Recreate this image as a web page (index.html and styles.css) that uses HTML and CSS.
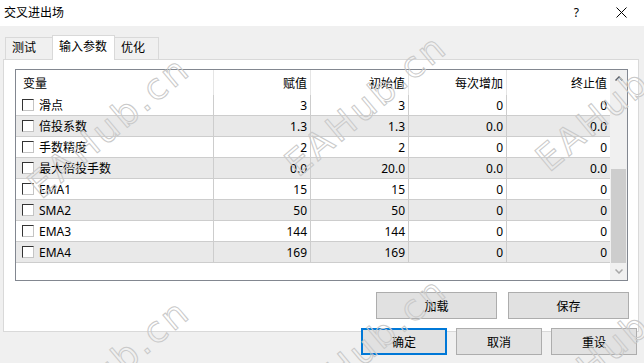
FILE: index.html
```html
<!DOCTYPE html>
<html>
  <head>
    <meta charset="utf-8">
    <title>交叉进出场</title>
    <link rel="stylesheet" href="styles.css">
  </head>
  <body>
    <div class="window">
      <div class="titlebar">
        <span class="title">交叉进出场</span>
        <span class="help">?</span>
        <svg class="close" width="11" height="11" viewBox="0 0 11 11">
          <path d="M0.5 0.5 L10.5 10.5 M10.5 0.5 L0.5 10.5" stroke="#000" stroke-width="1" fill="none"/>
        </svg>
      </div>

      <div class="tabs">
        <div class="tab tab-test">测试</div>
        <div class="tab tab-input active">输入参数</div>
        <div class="tab tab-opt">优化</div>
      </div>

      <div class="panel">
        <div class="list">
          <div class="grid">
            <div class="row head">
              <div class="cell name">变量</div>
              <div class="cell">赋值</div>
              <div class="cell">初始值</div>
              <div class="cell">每次增加</div>
              <div class="cell">终止值</div>
            </div>
            <div class="row">
              <div class="cell name"><span class="check"></span>滑点</div>
              <div class="cell">3</div><div class="cell">3</div><div class="cell">0</div><div class="cell">0</div>
            </div>
            <div class="row">
              <div class="cell name"><span class="check"></span>倍投系数</div>
              <div class="cell">1.3</div><div class="cell">1.3</div><div class="cell">0.0</div><div class="cell">0.0</div>
            </div>
            <div class="row">
              <div class="cell name"><span class="check"></span>手数精度</div>
              <div class="cell">2</div><div class="cell">2</div><div class="cell">0</div><div class="cell">0</div>
            </div>
            <div class="row">
              <div class="cell name"><span class="check"></span>最大倍投手数</div>
              <div class="cell">0.0</div><div class="cell">20.0</div><div class="cell">0.0</div><div class="cell">0.0</div>
            </div>
            <div class="row">
              <div class="cell name"><span class="check"></span>EMA1</div>
              <div class="cell">15</div><div class="cell">15</div><div class="cell">0</div><div class="cell">0</div>
            </div>
            <div class="row">
              <div class="cell name"><span class="check"></span>SMA2</div>
              <div class="cell">50</div><div class="cell">50</div><div class="cell">0</div><div class="cell">0</div>
            </div>
            <div class="row">
              <div class="cell name"><span class="check"></span>EMA3</div>
              <div class="cell">144</div><div class="cell">144</div><div class="cell">0</div><div class="cell">0</div>
            </div>
            <div class="row">
              <div class="cell name"><span class="check"></span>EMA4</div>
              <div class="cell">169</div><div class="cell">169</div><div class="cell">0</div><div class="cell">0</div>
            </div>
          </div>

          <div class="scrollbar">
            <div class="sb-btn">
              <svg width="8" height="5" viewBox="0 0 8 5"><path d="M0.5 4.5 L4 1 L7.5 4.5" stroke="#606060" stroke-width="1.5" fill="none"/></svg>
            </div>
            <div class="sb-track"><div class="sb-thumb"></div></div>
            <div class="sb-btn">
              <svg width="8" height="5" viewBox="0 0 8 5"><path d="M0.5 0.5 L4 4 L7.5 0.5" stroke="#a8a8a8" stroke-width="1.5" fill="none"/></svg>
            </div>
          </div>
        </div>

        <div class="actions">
          <button class="btn wide">加载</button>
          <button class="btn wide">保存</button>
        </div>
      </div>

      <div class="footer">
        <button class="btn default">确定</button>
        <button class="btn">取消</button>
        <button class="btn">重设</button>
      </div>

      <div class="wm wm1">EAHub.cn</div>
      <div class="wm wm2">EAHub.cn</div>
      <div class="wm wm3">EAHub.cn</div>
      <div class="wm wm4">EAHub.cn</div>
      <div class="wm wm5">EAHub.cn</div>
      <div class="wm wm6">EAHub.cn</div>
    </div>
  </body>
</html>
```

FILE: styles.css
```css
* {
  box-sizing: border-box;
}

body {
  margin: 0;
  background: #f0f0f0;
  font-family: "Noto Sans", "Noto Sans CJK SC", sans-serif;
  font-size: 12px;
  color: #000;
  overflow: hidden;
}

.window {
  position: relative;
  width: 644px;
  height: 363px;
  overflow: hidden;
}

.titlebar {
  height: 26px;
  background: #fff;
  display: flex;
  align-items: center;
  padding: 0 17px 2px 4px;
}

.help {
  margin-left: auto;
  font-size: 12px;
}

.close {
  margin-left: 37px;
}

.tabs {
  height: 33px;
  display: flex;
  align-items: flex-end;
  padding-left: 5px;
}

.tab {
  height: 22px;
  line-height: 20px;
  padding-left: 6px;
  border: 1px solid #d9d9d9;
  border-bottom: 0;
  background: #f0f0f0;
}

.tab + .tab {
  margin-left: -1px;
}

.tab-test {
  width: 48px;
}

.tab-input {
  width: 63px;
}

.tab-opt {
  width: 45px;
}

.tab.active {
  height: 25px;
  line-height: 22px;
  margin-bottom: -1px;
  background: #fff;
  position: relative;
  z-index: 1;
}

.panel {
  margin-left: 3px;
  width: 636px;
  height: 273px;
  background: #fff;
  border: 1px solid #d9d9d9;
  padding: 9px 9px 0 11px;
}

.list {
  width: 613px;
  height: 212px;
  border: 1px solid #828790;
  display: flex;
}

.grid {
  width: 594px;
}

.row {
  display: grid;
  grid-template-columns: 197px 97px 98px 98px 104px;
  height: 21px;
  border-bottom: 1px solid #cdcdcd;
}

.row:nth-child(odd) {
  background: #e9e9e9;
}

.row.head {
  height: 25px;
  border-bottom: 0;
  background: #fff;
}

.cell {
  display: flex;
  align-items: center;
  justify-content: flex-end;
  padding-right: 3px;
  border-left: 1px solid #cdcdcd;
  white-space: nowrap;
}

.cell.name {
  justify-content: flex-start;
  padding-left: 6px;
  border-left: 0;
}

.head .cell {
  border-left-color: #e5e5e5;
}

.head .cell.name {
  padding-left: 7px;
}

.check {
  width: 12px;
  height: 12px;
  margin-right: 5px;
  background: #fff;
  border: 1px solid;
  border-color: #333 #c4c4c4 #c4c4c4 #333;
}

.scrollbar {
  width: 17px;
  background: #f0f0f0;
  display: flex;
  flex-direction: column;
}

.sb-btn {
  height: 17px;
  display: flex;
  align-items: center;
  justify-content: center;
}

.sb-track {
  flex: 1;
  display: flex;
  flex-direction: column;
  justify-content: flex-end;
}

.sb-thumb {
  height: 94px;
  margin: 0 1px;
  background: #cdcdcd;
}

.actions {
  display: flex;
  justify-content: flex-end;
  gap: 11px;
  margin-top: 11px;
}

.btn {
  width: 86px;
  height: 27px;
  padding: 0;
  background: #e1e1e1;
  border: 1px solid #adadad;
  font: inherit;
  color: #000;
}

.btn.wide {
  width: 121px;
}

.btn.default {
  border: 2px solid #0078d7;
}

.footer {
  display: flex;
  justify-content: flex-end;
  gap: 9px;
  padding-right: 7px;
  margin-top: -4px;
  position: relative;
}

/* site watermark drawn over the dialog */
.wm {
  position: absolute;
  font-family: "DejaVu Sans", sans-serif;
  font-size: 36px;
  line-height: 1;
  letter-spacing: 3px;
  white-space: nowrap;
  color: transparent;
  -webkit-text-stroke: 1px #c9c9c9;
  transform-origin: 0 30px;
  transform: rotate(-40deg);
  pointer-events: none;
  z-index: 5;
}

.wm1 { left: 41px; top: 170px; }
.wm2 { left: 298px; top: 148px; }
.wm3 { left: 549px; top: 143px; }
.wm4 { left: 41px; top: 413px; }
.wm5 { left: 298px; top: 391px; }
.wm6 { left: 549px; top: 386px; }
```
